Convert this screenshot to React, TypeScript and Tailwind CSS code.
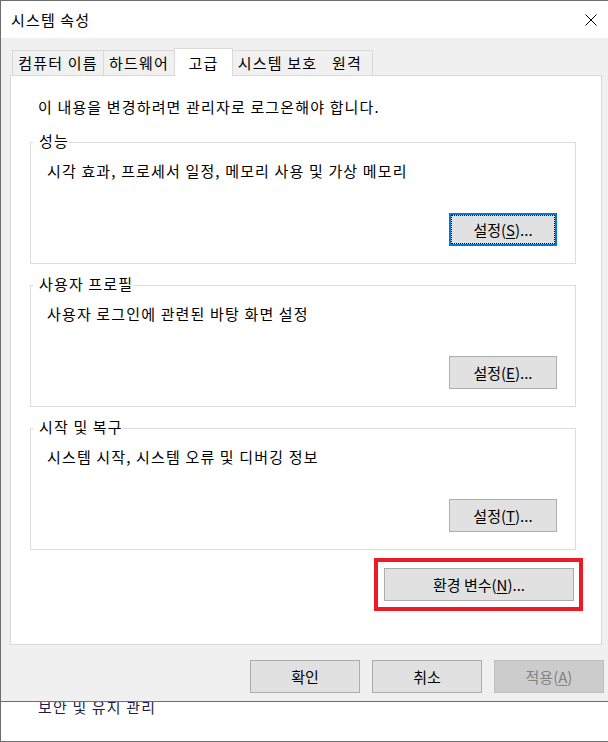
const tabs = [
  { label: "컴퓨터 이름", cls: "w-[91px] h-[25px] border-l border-t bg-[#f0f0f0]" },
  { label: "하드웨어", cls: "w-[71px] h-[25px] border-l border-t bg-[#f0f0f0]" },
  { label: "고급", cls: "w-[59px] h-[28px] -mb-px border-l border-t border-r bg-white relative z-10" },
  { label: "시스템 보호", cls: "w-[89px] h-[25px] border-t bg-[#f0f0f0]" },
  { label: "원격", cls: "w-[51px] h-[25px] border-t border-r bg-[#f0f0f0]" },
];

const groups = [
  { title: "성능", text: "시각 효과, 프로세서 일정, 메모리 사용 및 가상 메모리", key: "S", focused: true },
  { title: "사용자 프로필", text: "사용자 로그인에 관련된 바탕 화면 설정", key: "E", focused: false },
  { title: "시작 및 복구", text: "시스템 시작, 시스템 오류 및 디버깅 정보", key: "T", focused: false },
];

function SetupButton({ k, focused }: { k: string; focused: boolean }) {
  const label = (
    <>
      설정(<span className="underline underline-offset-2">{k}</span>)...
    </>
  );
  if (focused) {
    return (
      <button className="self-end w-[108px] h-[33px] border-2 border-[#0078d7] bg-[#e1e1e1] p-0 tracking-normal">
        <div className="h-full w-full border border-dotted border-black flex items-center justify-center">
          {label}
        </div>
      </button>
    );
  }
  return (
    <button className="self-end w-[108px] h-[33px] border border-[#adadad] bg-[#e1e1e1] flex items-center justify-center tracking-normal">
      {label}
    </button>
  );
}

export default function App() {
  return (
    <div className="w-[608px] h-[742px] bg-white border-l border-b border-[#6d6d6d] overflow-hidden font-['Noto_Sans_CJK_KR',sans-serif] text-[15px] leading-[20px] tracking-[1.15px] text-black">
      <div className="h-[702px] border-t border-b border-[#6d6d6d] flex flex-col">
        {/* title bar */}
        <div className="h-[37px] bg-white flex items-center justify-between pl-[10px] pr-[11px]">
          <span>시스템 속성</span>
          <svg width="12" height="12" viewBox="0 0 12 12">
            <path d="M0.5 0.5 L11.5 11.5 M11.5 0.5 L0.5 11.5" stroke="#000" strokeWidth="1" />
          </svg>
        </div>

        <div className="flex-1 bg-[#f0f0f0] pt-[10px] flex flex-col">
          {/* tabs */}
          <div className="h-[27px] flex items-end ml-[11px]">
            {tabs.map((t) => (
              <div key={t.label} className={`${t.cls} border-[#d9d9d9] flex items-center justify-center`}>
                {t.label}
              </div>
            ))}
          </div>

          {/* panel */}
          <div className="ml-[9px] w-[592px] h-[570px] border border-[#d9d9d9] bg-white flex flex-col">
            <p className="pl-[27px] pt-[21px]">이 내용을 변경하려면 관리자로 로그온해야 합니다.</p>

            {groups.map((g, i) => (
              <div
                key={g.title}
                className={`relative ml-[19px] w-[546px] h-[122px] border border-[#dcdcdc] flex flex-col pt-[18px] pl-[16px] pr-[18px] pb-[17px] ${
                  i === 0 ? "mt-[25px]" : "mt-[21px]"
                }`}
              >
                <span className="absolute left-[2px] top-[-12px] bg-white pl-[6px] pr-0">{g.title}</span>
                <p>{g.text}</p>
                <div className="mt-auto flex justify-end">
                  <SetupButton k={g.key} focused={g.focused} />
                </div>
              </div>
            ))}

            <div className="self-end mr-[18px] mt-[8px] border-4 border-[#ed1c24] pt-[6px] pl-[6px] pr-[5px] pb-[6px]">
              <button className="w-[190px] h-[33px] border border-[#adadad] bg-[#e1e1e1] flex items-center justify-center tracking-normal">
                환경 변수(<span className="underline underline-offset-2">N</span>)...
              </button>
            </div>
          </div>

          {/* dialog buttons */}
          <div className="mt-[15px] flex justify-end gap-[12px] pr-[4px] tracking-normal">
            <button className="w-[110px] h-[33px] border border-[#adadad] bg-[#e1e1e1]">확인</button>
            <button className="w-[110px] h-[33px] border border-[#adadad] bg-[#e1e1e1]">취소</button>
            <button className="w-[110px] h-[33px] border border-[#bfbfbf] bg-[#cccccc] text-[#838383]">
              적용(<span className="underline underline-offset-2">A</span>)
            </button>
          </div>
        </div>
      </div>

      {/* window behind the dialog */}
      <div className="h-[39px] overflow-hidden">
        <p className="-mt-[5px] pl-[37px] text-[#1f1f48]">보안 및 유지 관리</p>
      </div>
    </div>
  );
}
